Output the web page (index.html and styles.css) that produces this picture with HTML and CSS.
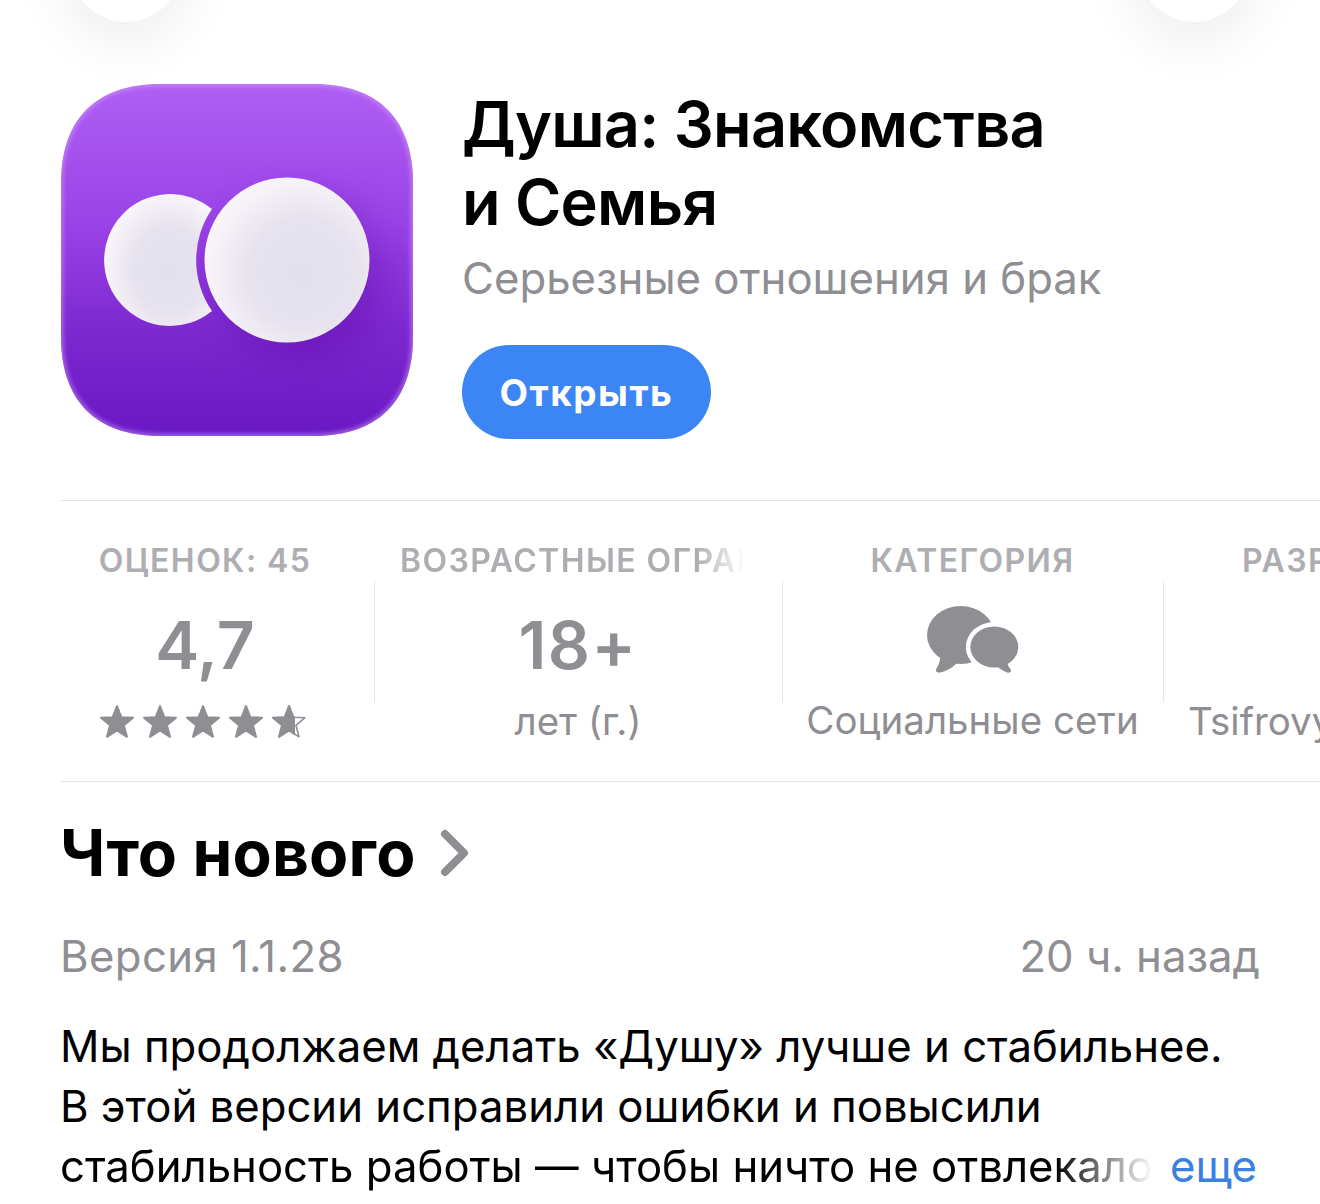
FILE: index.html
```html
<!DOCTYPE html>
<html lang="ru">
<head>
    <meta charset="UTF-8">
    <title>Душа: Знакомства и Семья</title>
    <link rel="stylesheet" href="styles.css">
</head>
<body>
    <div class="top-buttons">
        <span class="round-btn"></span>
        <span class="round-btn"></span>
    </div>
    <header class="app-head">
        <svg class="app-icon" viewBox="0 0 354 354" width="354" height="354">
            <defs>
                <linearGradient id="bg" x1="0" y1="0" x2="0" y2="1">
                    <stop offset="0" stop-color="#b05ff4"/>
                    <stop offset="0.4" stop-color="#9a42e6"/>
                    <stop offset="0.7" stop-color="#7d28d0"/>
                    <stop offset="1" stop-color="#6a18c4"/>
                </linearGradient>
                <radialGradient id="ball" cx="0.6" cy="0.58" r="0.6">
                    <stop offset="0" stop-color="#e2e0ec"/>
                    <stop offset="0.55" stop-color="#e6e3ee"/>
                    <stop offset="1" stop-color="#f8f5fa"/>
                </radialGradient>
                <filter id="soft" x="-60%" y="-60%" width="220%" height="220%">
                    <feGaussianBlur stdDeviation="22"/>
                </filter>
                <filter id="rim" x="-5%" y="-5%" width="110%" height="110%">
                    <feGaussianBlur stdDeviation="2"/>
                </filter>
                <clipPath id="icon-shape">
                    <path d="M100 1H254C318 1 353 36 353 100V254C353 318 318 353 254 353H100C36 353 1 318 1 254V100C1 36 36 1 100 1Z"/>
                </clipPath>
            </defs>
            <g clip-path="url(#icon-shape)">
                <rect width="354" height="354" fill="url(#bg)"/>
                <circle cx="242" cy="195" r="80" fill="#5a10a0" fill-opacity="0.4" filter="url(#soft)"/>
                <path d="M100 1H254C318 1 353 36 353 100V254C353 318 318 353 254 353H100C36 353 1 318 1 254V100C1 36 36 1 100 1Z" fill="none" stroke="#d3a6fa" stroke-opacity="0.6" stroke-width="4" filter="url(#rim)"/>
            </g>
            <path d="M152 126A66 66 0 1 0 152 228A90 90 0 0 1 152 126Z" fill="url(#ball)"/>
            <circle cx="227" cy="177" r="82.5" fill="url(#ball)"/>
        </svg>
        <div class="app-info">
            <h1>Душа: Знакомства<br>и Семья</h1>
            <p class="subtitle">Серьезные отношения и брак</p>
            <button type="button" class="open-btn">Открыть</button>
        </div>
    </header>

    <section class="stats">
        <div class="stat stat-rating">
            <div class="stat-label">ОЦЕНОК: 45</div>
            <div class="stat-big">4,7</div>
            <svg class="stars" viewBox="0 0 208 36" width="208" height="36">
                <defs>
                    <polygon id="star" points="18,2 22.3,13.2 34,13.7 24.9,21.3 28,32.8 18,26.3 8,32.8 11.1,21.3 2,13.7 13.7,13.2" stroke-linejoin="round"/>
                    <clipPath id="star-part"><rect x="172" y="0" width="24" height="36"/></clipPath>
                </defs>
                <use href="#star" class="star-full"/>
                <use href="#star" x="43" class="star-full"/>
                <use href="#star" x="86" class="star-full"/>
                <use href="#star" x="129" class="star-full"/>
                <use href="#star" x="172" class="star-line"/>
                <g clip-path="url(#star-part)"><use href="#star" x="172" class="star-full"/></g>
            </svg>
        </div>
        <div class="stat stat-age">
            <div class="stat-label">ВОЗРАСТНЫЕ ОГРАНИЧЕНИЯ</div>
            <div class="stat-big">18+</div>
            <div class="stat-sub">лет (г.)</div>
        </div>
        <div class="stat stat-cat">
            <div class="stat-label">КАТЕГОРИЯ</div>
            <svg class="chat-icon" viewBox="0 0 93 68" width="93" height="68">
                <ellipse cx="34.7" cy="30" rx="33.7" ry="29" fill="#8e8e93"/>
                <path d="M14 52C14 58 12 61 10.500 63.500C9 66 11 68 14 67.500C20 66.500 26 63 31 58Z" fill="#8e8e93"/>
                <ellipse cx="68.300" cy="42" rx="28.500" ry="25" fill="#fff"/>
                <ellipse cx="68.300" cy="42" rx="24" ry="20.500" fill="#8e8e93"/>
                <path d="M69 60C73 63 77 66 81 67.500C84 68.500 86 66 84.500 64C83 62 81.500 60 81 57Z" fill="#8e8e93"/>
            </svg>
            <div class="stat-sub">Социальные сети</div>
        </div>
        <div class="stat stat-dev">
            <div class="stat-label">РАЗРАБОТЧИК</div>
            <div class="stat-sub dev-name">Tsifrovye tekhnologii</div>
        </div>
    </section>

    <section class="whats-new">
        <h2>Что нового
            <svg class="chevron" viewBox="0 0 30 48" width="30" height="48"><path d="M5 5L24 24L5 43" fill="none" stroke="#8e8e93" stroke-width="8" stroke-linecap="round" stroke-linejoin="round"/></svg>
        </h2>
        <div class="version-row">
            <span class="version-num">Версия 1.1.28</span>
            <span>20 ч. назад</span>
        </div>
        <div class="notes">
            <div>Мы продолжаем делать «Душу» лучше и стабильнее.</div>
            <div>В этой версии исправили ошибки и повысили</div>
            <div class="notes-last">
                <span class="notes-fade">стабильность работы — чтобы ничто не отвлекало</span>
                <span class="more">еще</span>
            </div>
        </div>
    </section>
</body>
</html>
```

FILE: styles.css
```css
html, body {
    margin: 0;
    height: 1204px;
    overflow: hidden;
}
body {
    font-family: 'Inter', 'Liberation Sans', sans-serif;
    background-color: #fff;
    color: #000;
    padding-left: 60px;
    position: relative;
}
.top-buttons {
    position: absolute;
    left: 70px;
    right: 70px;
    top: -90px;
    display: flex;
    justify-content: space-between;
}
.round-btn {
    width: 112px;
    height: 112px;
    border-radius: 50%;
    background-color: #fff;
    box-shadow: 0 12px 50px 12px rgba(0, 0, 0, 0.06);
}
.app-head {
    display: flex;
    gap: 48px;
    padding-top: 83px;
    height: 501px;
    box-sizing: border-box;
    border-bottom: 1px solid #e6e6e8;
}
.app-icon {
    flex: none;
}
.app-info {
    padding-top: 2px;
}
h1 {
    margin: 0;
    font-size: 63px;
    line-height: 78px;
    font-weight: 600;
    letter-spacing: -0.75px;
}
.subtitle {
    margin: 13px 0 0;
    font-size: 43.7px;
    line-height: 50px;
    color: #8e8e93;
}
.open-btn {
    display: block;
    margin-top: 41px;
    width: 249px;
    height: 94px;
    border: none;
    border-radius: 47px;
    background-color: #3b86f4;
    color: #fff;
    font-family: inherit;
    font-size: 37px;
    font-weight: 700;
    letter-spacing: 1.5px;
}
.stats {
    display: flex;
    height: 281px;
    box-sizing: border-box;
    border-bottom: 1px solid #e6e6e8;
    color: #8e8e93;
    overflow: hidden;
}
.stat {
    flex: none;
    box-sizing: border-box;
    text-align: center;
    padding-top: 41px;
    position: relative;
    white-space: nowrap;
}
.stat-rating {
    width: 314px;
    padding-right: 24px;
}
.stat-age { width: 408px; }
.stat-cat { width: 381px; }
.stat-dev { width: 300px; }
.stat-age::before, .stat-cat::before, .stat-dev::before {
    content: "";
    position: absolute;
    left: 0;
    top: 80px;
    height: 121px;
    width: 1px;
    background-color: #e6e6e8;
}
.stat-label {
    font-size: 32px;
    line-height: 38px;
    font-weight: 600;
    letter-spacing: 1.4px;
    color: #aeaeb2;
}
.stat-age .stat-label {
    width: 345px;
    margin-left: 26px;
    overflow: hidden;
    text-align: left;
    -webkit-mask-image: linear-gradient(to right, #000 86%, transparent 100%);
    mask-image: linear-gradient(to right, #000 86%, transparent 100%);
}
.stat-big {
    margin-top: 25px;
    font-size: 66px;
    line-height: 80px;
    font-weight: 600;
}
.stat-age .stat-big {
    letter-spacing: 1.5px;
}
.stars {
    display: block;
    margin: 19px 0 0 39px;
}
.star-full {
    fill: #8e8e93;
    stroke: #8e8e93;
    stroke-width: 2;
}
.star-line {
    fill: none;
    stroke: #8e8e93;
    stroke-width: 1.5;
}
.stat-sub {
    margin-top: 13px;
    font-size: 38.5px;
    line-height: 46px;
}
.stat-cat .stat-sub {
    margin-top: 24px;
}
.stat-dev {
    text-align: left;
}
.stat-dev .stat-label {
    margin-left: 79px;
}
.dev-name {
    margin: 118px 0 0 25px;
}
.chat-icon {
    display: block;
    margin: 25px auto 0;
}
h2 {
    margin: 0;
    padding-top: 35px;
    font-size: 64px;
    line-height: 72px;
    font-weight: 700;
    letter-spacing: 0.2px;
    display: flex;
    align-items: center;
    gap: 24px;
}
.version-row {
    display: flex;
    justify-content: space-between;
    margin-top: 40px;
    padding-right: 60px;
    font-size: 43.7px;
    line-height: 56px;
    color: #8e8e93;
}
.version-num {
    letter-spacing: 0.4px;
}
.notes {
    margin-top: 32px;
    font-size: 43.7px;
    line-height: 60px;
    white-space: nowrap;
}
.notes-last {
    display: flex;
    justify-content: space-between;
    padding-right: 63px;
}
.notes-fade {
    -webkit-mask-image: linear-gradient(to right, #000 91%, transparent 100%);
    mask-image: linear-gradient(to right, #000 91%, transparent 100%);
}
.more {
    color: #3b82e0;
}
```
